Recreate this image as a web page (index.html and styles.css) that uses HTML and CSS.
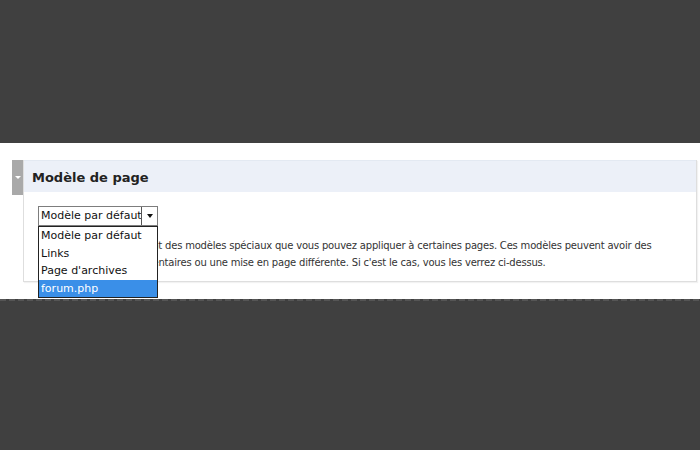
FILE: index.html
```html
<!DOCTYPE html>
<html lang="fr">
<head>
    <meta charset="UTF-8">
    <title>Modèle de page</title>
    <link rel="stylesheet" href="styles.css">
</head>
<body>
    <div class="top"></div>
    <div class="panel">
        <div class="tab"><span class="tab-arrow"></span></div>
        <div class="box">
            <h3 class="box-title">Modèle de page</h3>
            <div class="box-body">
                <div class="select-wrap">
                    <div class="select">
                        <span class="select-value">Modèle par défaut</span>
                        <span class="select-btn"><span class="caret"></span></span>
                    </div>
                    <ul class="options">
                        <li>Modèle par défaut</li>
                        <li>Links</li>
                        <li>Page d'archives</li>
                        <li class="selected">forum.php</li>
                    </ul>
                </div>
                <p class="help">Certains thèmes ont des modèles spéciaux que vous pouvez appliquer à certaines pages. Ces modèles peuvent avoir des fonctions supplémentaires ou une mise en page différente. Si c'est le cas, vous les verrez ci-dessus.</p>
            </div>
        </div>
    </div>
    <div class="bottom"></div>
</body>
</html>
```

FILE: styles.css
```css
body {
    margin: 0;
    padding: 0;
    background-color: #404040;
    font-family: "DejaVu Sans", Verdana, sans-serif;
    color: #333;
    height: 450px;
    overflow: hidden;
}

.top {
    height: 143px;
}

.panel {
    background-color: #fff;
    height: 156px;
    padding: 17px 0 0 12px;
    box-sizing: border-box;
    display: flex;
    align-items: flex-start;
}

.bottom {
    height: 2px;
    background-image: repeating-linear-gradient(90deg, #555 0 6px, #404040 6px 9px);
}

.tab {
    width: 11px;
    height: 35px;
    background-color: #a9a9a9;
    display: flex;
    align-items: center;
    justify-content: center;
}

.tab-arrow {
    width: 0;
    height: 0;
    border-left: 3px solid transparent;
    border-right: 3px solid transparent;
    border-top: 3px solid #fff;
}

.box {
    width: 672px;
    border: 1px solid #dedede;
    border-top: none;
    box-shadow: 1px 1px 1px rgba(0, 0, 0, 0.05);
}

.box-title {
    margin: 0;
    height: 32px;
    line-height: 34px;
    padding-left: 8px;
    font-size: 13px;
    font-weight: bold;
    color: #222;
    background-color: #ecf0f8;
    border-top: 1px solid #e3e9f2;
    box-sizing: border-box;
}

.box-body {
    padding: 14px 0 10px 14px;
}

.select-wrap {
    position: relative;
    height: 20px;
}

.select {
    width: 120px;
    height: 20px;
    box-sizing: border-box;
    border: 1px solid #7d7d7d;
    display: flex;
    font-size: 11px;
    background-color: #fff;
}

.select-value {
    flex: 1;
    line-height: 18px;
    padding-left: 2px;
    color: #111;
    white-space: nowrap;
    overflow: hidden;
}

.select-btn {
    width: 15px;
    border-left: 1px solid #555;
    display: flex;
    align-items: center;
    justify-content: center;
}

.caret {
    width: 0;
    height: 0;
    border-left: 3px solid transparent;
    border-right: 3px solid transparent;
    border-top: 4px solid #111;
}

.options {
    position: absolute;
    top: 20px;
    left: 0;
    width: 120px;
    box-sizing: border-box;
    margin: 0;
    padding: 0;
    list-style: none;
    border: 1px solid #222;
    background-color: #fff;
    font-size: 11px;
    color: #111;
    z-index: 2;
}

    .options li {
        height: 17.5px;
        line-height: 17.5px;
        padding-left: 2px;
        white-space: nowrap;
    }

    .options .selected {
        background-color: #3a8fe8;
        color: #fff;
    }

.help {
    margin: 11px 0 0 26px;
    font-size: 10px;
    letter-spacing: -0.2px;
    line-height: 17px;
    color: #333;
    width: 625px;
}
```
